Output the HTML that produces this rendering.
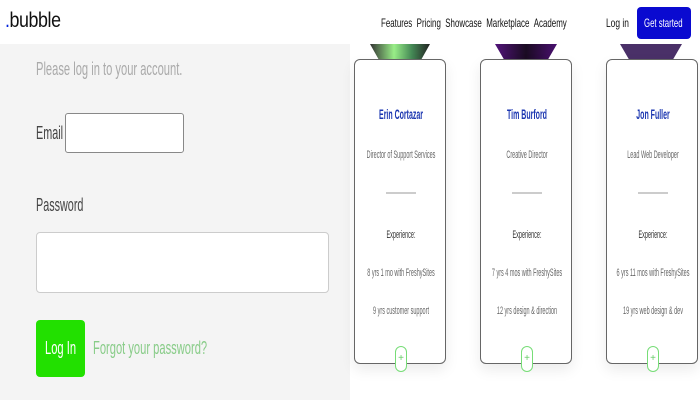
<!DOCTYPE html><html><head><style>
*{margin:0;padding:0;box-sizing:border-box}
body{width:700px;height:400px;overflow:hidden;background:#fff;font-family:"Liberation Sans",sans-serif;position:relative}
.a{position:absolute;white-space:nowrap}
.c{transform:scaleX(.62);transform-origin:left center}
.cc{transform:translateX(-50%) scaleX(.5);transform-origin:center;white-space:nowrap}
.card{position:absolute;top:59px;width:92px;height:305px;border:1px solid #666;border-radius:6px;background:#fff;box-shadow:0 6px 14px rgba(0,0,0,.08)}
.img{position:absolute;top:44px;height:16px;clip-path:polygon(0 0,100% 0,85% 100%,15% 100%)}
.t{position:absolute;left:46px;font-size:11px;color:#666;line-height:12px}
.hr{position:absolute;left:31px;top:132px;width:30px;height:2px;background:#ccc}
.plus{position:absolute;left:40px;top:286px;width:12px;height:26px;border:1px solid #7d7;border-radius:6px;background:#fff;color:#6c6;font-size:10px;text-align:center;line-height:24px}
</style></head><body>
<div class="a" style="left:0;top:44px;width:350px;height:356px;background:#f4f4f4"></div>
<div class="a" style="left:5px;top:9px;font-size:21px;color:#111;letter-spacing:-0.5px"><span class="c" style="display:inline-block;transform:scaleX(.85)"><span style="color:#0022dd">.</span>bubble</span></div>
<div class="a" style="left:381px;top:16px;font-size:12px;color:#111;transform:scaleX(.66);transform-origin:left center">Features &nbsp;Pricing &nbsp;Showcase &nbsp;Marketplace &nbsp;Academy</div>
<div class="a" style="left:606px;top:16px;font-size:12px;color:#111;transform:scaleX(.7);transform-origin:left center">Log in</div>
<div class="a" style="left:637px;top:7px;width:54px;height:32px;background:#0a0ad0;border-radius:4px"></div>
<div class="a" style="left:644px;top:16px;font-size:12px;color:#fff;transform:scaleX(.65);transform-origin:left center">Get started</div>
<div class="a c" style="left:36px;top:59px;font-size:18px;color:#aaa">Please log in to your account.</div>
<div class="a" style="left:36px;top:123px;font-size:18px;color:#444;transform:scaleX(.6);transform-origin:left center">Email</div>
<div class="a" style="left:65px;top:113px;width:119px;height:40px;border:1px solid #888;border-radius:3px;background:#fff"></div>
<div class="a" style="left:36px;top:195px;font-size:18px;color:#444;transform:scaleX(.6);transform-origin:left center">Password</div>
<div class="a" style="left:36px;top:232px;width:293px;height:61px;border:1px solid #ccc;border-radius:4px;background:#fff"></div>
<div class="a" style="left:36px;top:320px;width:49px;height:57px;background:#22e000;border-radius:4px"></div>
<div class="a c" style="left:45px;top:338px;font-size:18px;color:#fff">Log In</div>
<div class="a c" style="left:93px;top:338px;font-size:18px;color:#8c8">Forgot your password?</div>

<div class="img" style="left:370px;width:60px;background:linear-gradient(90deg,#333,#9e8 40%,#485 70%,#222)"></div>
<div class="img" style="left:495px;width:62px;background:linear-gradient(90deg,#52147a,#1a0b22 50%,#4a1070)"></div>
<div class="img" style="left:620px;width:62px;background:#4a3068"></div>

<div class="card" style="left:354px">
<div class="a cc" style="left:46px;top:46px;font-size:14px;font-weight:bold;color:#1a35b0">Erin Cortazar</div>
<div class="t cc" style="top:89px">Director of Support Services</div><div class="hr"></div>
<div class="t cc" style="top:169px;color:#333">Experience:</div>
<div class="t cc" style="top:207px">8 yrs 1 mo with FreshySites</div>
<div class="t cc" style="top:245px">9 yrs customer support</div>
<div class="plus">+</div></div>
<div class="card" style="left:480px">
<div class="a cc" style="left:46px;top:46px;font-size:14px;font-weight:bold;color:#1a35b0">Tim Burford</div>
<div class="t cc" style="top:89px">Creative Director</div><div class="hr"></div>
<div class="t cc" style="top:169px;color:#333">Experience:</div>
<div class="t cc" style="top:207px">7 yrs 4 mos with FreshySites</div>
<div class="t cc" style="top:245px">12 yrs design &amp; direction</div>
<div class="plus">+</div></div>
<div class="card" style="left:606px">
<div class="a cc" style="left:46px;top:46px;font-size:14px;font-weight:bold;color:#1a35b0">Jon Fuller</div>
<div class="t cc" style="top:89px">Lead Web Developer</div><div class="hr"></div>
<div class="t cc" style="top:169px;color:#333">Experience:</div>
<div class="t cc" style="top:207px">6 yrs 11 mos with FreshySites</div>
<div class="t cc" style="top:245px">19 yrs web design &amp; dev</div>
<div class="plus">+</div></div>
</body></html>
